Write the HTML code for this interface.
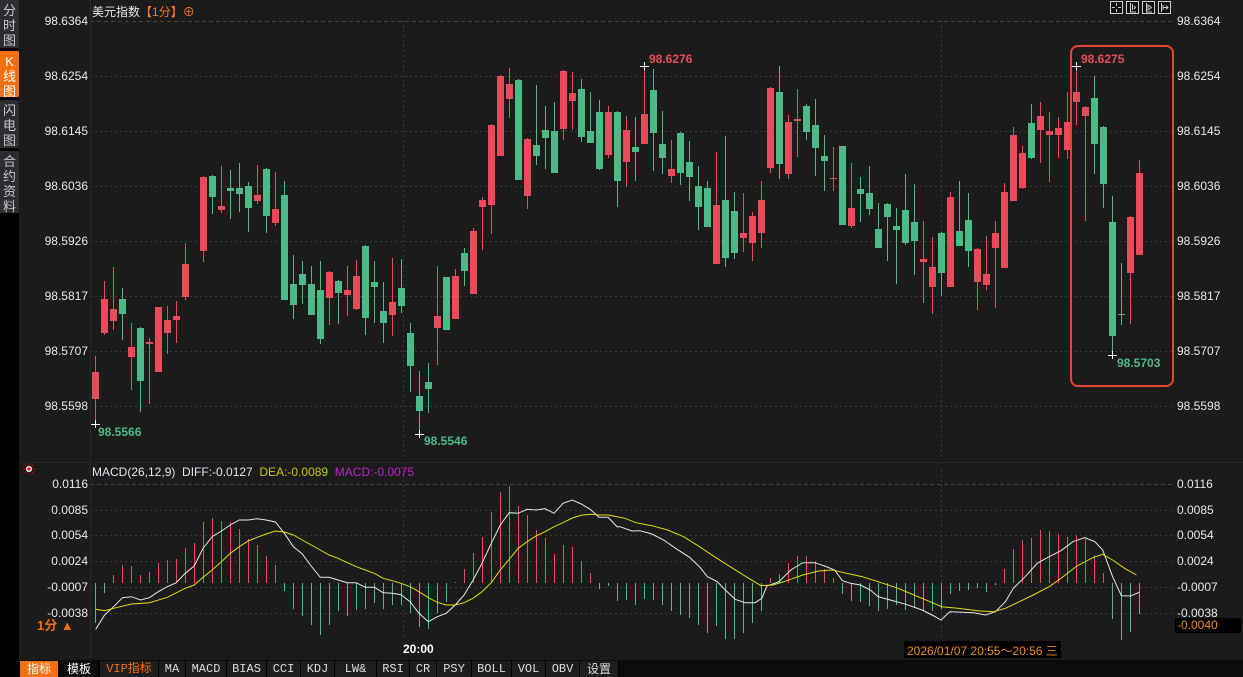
<!DOCTYPE html>
<html><head><meta charset="utf-8"><style>
*{margin:0;padding:0;box-sizing:border-box}
body{width:1243px;height:677px;background:#1b1b1b;overflow:hidden;position:relative;font-family:"Liberation Sans","Noto Sans CJK SC",sans-serif;color:#e6e6e6}
.side{position:absolute;left:0;top:0;width:19px;height:677px;background:#000}
.tab{position:absolute;left:0;width:19px;background:#2b2d31;color:#c8c8c8;font-size:13px;line-height:15px;text-align:center;padding-top:3px}
.tab.on{background:#f57010;color:#fff}
.lab{position:absolute;font-size:12px;color:#e8e8e8}
.l{left:20px;width:68px;text-align:right}
.r{left:1177px}
.bar{position:absolute;left:19px;top:660px;width:1224px;height:17px;background:#0c0c0c}
.bt{position:absolute;top:661px;height:16px;font-size:12px;line-height:16px;text-align:center;color:#ddd;background:#1e1e1e;border-right:1px solid #000;font-family:"Liberation Mono","Noto Sans CJK SC",monospace}
</style></head><body>
<div class="side"></div>
<div class="tab" style="top:0;height:48px">分<br>时<br>图</div>
<div class="tab on" style="top:51px;height:46px">K<br>线<br>图</div>
<div class="tab" style="top:100px;height:48px">闪<br>电<br>图</div>
<div class="tab" style="top:151px;height:62px">合<br>约<br>资<br>料</div>

<svg style="position:absolute;left:0;top:0" width="1243" height="677">
<g stroke="#3a3a3a" stroke-dasharray="2,3" stroke-width="1">
<path d="M90 21.5H1172" stroke="#444" stroke-dasharray="4,3"/>
<path d="M90 76.5H1172M90 131.5H1172M90 186.5H1172M90 241.5H1172M90 296.5H1172M90 351.5H1172M90 406.5H1172"/>
<path d="M90 484.5H1172" stroke="#444" stroke-dasharray="4,3"/>
<path d="M90 510.5H1172M90 535.5H1172M90 561.5H1172M90 587.5H1172M90 613.5H1172"/>
<path d="M403.5 20V460M941.5 20V460M403.5 470V640M941.5 470V640"/>
</g>
<path d="M90.5 0V660" stroke="#262626"/>
<path d="M19 462.5H1243" stroke="#262626"/>
<g id="red" fill="#e94b5b" stroke="#e94b5b">
<path fill="none" d="M95.5 356V424M104.5 281V335M113.5 267V330M131.5 323V390M149.5 338V404M158.5 307V372M167.5 306V354M176.5 301V343M185.5 243V300M203.5 176V262M221.5 166V213M257.5 165V204M275.5 172V226M329.5 271V325M347.5 266V316M356.5 260V310M392.5 258V336M437.5 266V365M455.5 269V319M473.5 228V294M482.5 197V250M491.5 124V234M500.5 75V156M509.5 68V118M527.5 138V209M563.5 70V140M572.5 72V130M608.5 106V158M626.5 116V187M644.5 66V144M671.5 140V183M716.5 152V264M743.5 193V252M752.5 212V261M761.5 181V248M770.5 87V173M788.5 115V179M797.5 89V157M833.5 147V191M851.5 163V228M923.5 221V303M932.5 237V314M950.5 192V287M977.5 248V310M986.5 236V290M995.5 221V308M1004.5 183V268M1013.5 127V201M1022.5 146V189M1040.5 102V163M1049.5 112V182M1058.5 117V158M1067.5 92V159M1076.5 66V125M1085.5 106V221M1130.5 216V324M1139.5 160V255"/>
<g stroke="none">
<rect x="92" y="372" width="7" height="27"/><rect x="101" y="299" width="7" height="34"/><rect x="110" y="309" width="7" height="12"/><rect x="128" y="347" width="7" height="10"/><rect x="146" y="342" width="7" height="2"/><rect x="155" y="307" width="7" height="65"/><rect x="164" y="320" width="7" height="13"/><rect x="173" y="316" width="7" height="4"/><rect x="182" y="264" width="7" height="33"/><rect x="200" y="177" width="7" height="74"/><rect x="218" y="206" width="7" height="4"/><rect x="254" y="195" width="7" height="6"/><rect x="272" y="209" width="7" height="14"/><rect x="326" y="272" width="7" height="26"/><rect x="344" y="290" width="7" height="5"/><rect x="353" y="276" width="7" height="33"/><rect x="389" y="302" width="7" height="13"/><rect x="434" y="316" width="7" height="12"/><rect x="452" y="276" width="7" height="43"/><rect x="470" y="231" width="7" height="63"/><rect x="479" y="200" width="7" height="7"/><rect x="488" y="125" width="7" height="80"/><rect x="497" y="76" width="7" height="80"/><rect x="506" y="84" width="7" height="15"/><rect x="524" y="139" width="7" height="57"/><rect x="560" y="71" width="7" height="58"/><rect x="569" y="93" width="7" height="8"/><rect x="605" y="112" width="7" height="43"/><rect x="623" y="130" width="7" height="32"/><rect x="641" y="114" width="7" height="30"/><rect x="668" y="169" width="7" height="7"/><rect x="713" y="205" width="7" height="59"/><rect x="740" y="233" width="7" height="5"/><rect x="749" y="216" width="7" height="27"/><rect x="758" y="200" width="7" height="33"/><rect x="767" y="88" width="7" height="80"/><rect x="785" y="122" width="7" height="52"/><rect x="794" y="119" width="7" height="2"/><rect x="830" y="178" width="7" height="1"/><rect x="848" y="208" width="7" height="18"/><rect x="920" y="259" width="7" height="3"/><rect x="929" y="267" width="7" height="20"/><rect x="947" y="197" width="7" height="90"/><rect x="974" y="249" width="7" height="33"/><rect x="983" y="274" width="7" height="11"/><rect x="992" y="233" width="7" height="15"/><rect x="1001" y="192" width="7" height="76"/><rect x="1010" y="135" width="7" height="66"/><rect x="1019" y="153" width="7" height="35"/><rect x="1037" y="116" width="7" height="14"/><rect x="1046" y="131" width="7" height="4"/><rect x="1055" y="128" width="7" height="7"/><rect x="1064" y="122" width="7" height="28"/><rect x="1073" y="92" width="7" height="10"/><rect x="1082" y="107" width="7" height="9"/><rect x="1127" y="217" width="7" height="56"/><rect x="1136" y="173" width="7" height="82"/>
</g></g>
<g fill="#4cba87" stroke="#4cba87">
<path fill="none" d="M122.5 288V340M140.5 327V412M212.5 175V214M230.5 170V219M239.5 163V212M248.5 182V232M266.5 168V233M284.5 181V300M293.5 255V319M302.5 261V304M311.5 266V315M320.5 261V344M338.5 280V324M365.5 245V335M374.5 261V323M383.5 282V343M401.5 259V313M410.5 323V392M419.5 371V434M428.5 363V413M446.5 277V330M464.5 248V286M518.5 79V180M536.5 85V165M545.5 106V169M554.5 102V173M581.5 79V142M590.5 92V143M599.5 100V170M617.5 111V207M635.5 117V181M653.5 69V171M662.5 111V174M680.5 132V185M689.5 141V201M698.5 166V230M707.5 181V227M725.5 136V267M734.5 192V259M779.5 66V179M806.5 104V140M815.5 99V176M824.5 135V191M842.5 146V225M860.5 177V222M869.5 166V215M878.5 203V248M887.5 203V261M896.5 208V284M905.5 174V245M914.5 184V275M941.5 232V296M959.5 181V246M968.5 193V267M1031.5 104V159M1094.5 76V174M1103.5 126V208M1112.5 196V355M1121.5 263V325"/>
<g stroke="none">
<rect x="119" y="299" width="7" height="15"/><rect x="137" y="328" width="7" height="53"/><rect x="209" y="176" width="7" height="21"/><rect x="227" y="188" width="7" height="3"/><rect x="236" y="188" width="7" height="6"/><rect x="245" y="186" width="7" height="22"/><rect x="263" y="169" width="7" height="47"/><rect x="281" y="195" width="7" height="105"/><rect x="290" y="284" width="7" height="21"/><rect x="299" y="274" width="7" height="11"/><rect x="308" y="284" width="7" height="31"/><rect x="317" y="290" width="7" height="49"/><rect x="335" y="281" width="7" height="12"/><rect x="362" y="246" width="7" height="72"/><rect x="371" y="282" width="7" height="5"/><rect x="380" y="311" width="7" height="12"/><rect x="398" y="288" width="7" height="18"/><rect x="407" y="333" width="7" height="33"/><rect x="416" y="396" width="7" height="15"/><rect x="425" y="382" width="7" height="7"/><rect x="443" y="277" width="7" height="53"/><rect x="461" y="253" width="7" height="18"/><rect x="515" y="80" width="7" height="100"/><rect x="533" y="145" width="7" height="11"/><rect x="542" y="130" width="7" height="8"/><rect x="551" y="131" width="7" height="42"/><rect x="578" y="89" width="7" height="48"/><rect x="587" y="131" width="7" height="12"/><rect x="596" y="112" width="7" height="57"/><rect x="614" y="112" width="7" height="69"/><rect x="632" y="147" width="7" height="5"/><rect x="650" y="90" width="7" height="43"/><rect x="659" y="144" width="7" height="14"/><rect x="677" y="133" width="7" height="40"/><rect x="686" y="162" width="7" height="15"/><rect x="695" y="186" width="7" height="21"/><rect x="704" y="188" width="7" height="39"/><rect x="722" y="200" width="7" height="58"/><rect x="731" y="211" width="7" height="42"/><rect x="776" y="92" width="7" height="72"/><rect x="803" y="106" width="7" height="26"/><rect x="812" y="125" width="7" height="23"/><rect x="821" y="156" width="7" height="5"/><rect x="839" y="146" width="7" height="79"/><rect x="857" y="189" width="7" height="5"/><rect x="866" y="193" width="7" height="16"/><rect x="875" y="229" width="7" height="19"/><rect x="884" y="204" width="7" height="13"/><rect x="893" y="226" width="7" height="4"/><rect x="902" y="210" width="7" height="33"/><rect x="911" y="222" width="7" height="19"/><rect x="938" y="233" width="7" height="40"/><rect x="956" y="231" width="7" height="15"/><rect x="965" y="220" width="7" height="31"/><rect x="1028" y="123" width="7" height="35"/><rect x="1091" y="98" width="7" height="46"/><rect x="1100" y="127" width="7" height="57"/><rect x="1109" y="222" width="7" height="114"/><rect x="1118" y="314" width="7" height="1"/>
</g></g>
<g stroke="#fff" stroke-width="1"><path d="M91 424.5H100M95.5 420V428M415 434.5H424M419.5 430V438M640 66.5H649M644.5 62V70M1072 66.5H1081M1076.5 62V70M1108 355.5H1117M1112.5 351V359"/></g>
<rect x="1071" y="46" width="102" height="340" rx="7" fill="none" stroke="#e8432e" stroke-width="2"/>
<g font-size="12" font-weight="bold" font-family="Liberation Sans,sans-serif">
<text x="98" y="436" fill="#4cba87">98.5566</text>
<text x="424" y="445" fill="#4cba87">98.5546</text>
<text x="649" y="63" fill="#e94b5b">98.6276</text>
<text x="1081" y="63" fill="#e94b5b">98.6275</text>
<text x="1117" y="367" fill="#4cba87">98.5703</text>
</g>
<!-- MACD histogram -->
<path stroke="#e94b5b" d="M113.5 583V575M122.5 583V565M131.5 583V566M140.5 583V575M149.5 583V572M158.5 583V563M167.5 583V560M176.5 583V559M185.5 583V548M194.5 583V543M203.5 583V522M212.5 583V518M221.5 583V521M230.5 583V522M239.5 583V529M248.5 583V539M257.5 583V545M266.5 583V556M275.5 583V565M455.5 583V582M464.5 583V569M473.5 583V553M482.5 583V537M491.5 583V512M500.5 583V492M509.5 583V486M518.5 583V506M527.5 583V515M536.5 583V530M545.5 583V538M554.5 583V554M563.5 583V545M572.5 583V547M581.5 583V561M590.5 583V573M770.5 583V578M779.5 583V574M788.5 583V563M797.5 583V556M806.5 583V556M815.5 583V561M824.5 583V569M833.5 583V578M1004.5 583V569M1013.5 583V549M1022.5 583V540M1031.5 583V538M1040.5 583V530M1049.5 583V531M1058.5 583V534M1067.5 583V537M1076.5 583V535M1085.5 583V539M1094.5 583V555M1103.5 583V573"/>
<path stroke="#4cba87" d="M95.5 583V623M104.5 583V593M284.5 583V591M293.5 583V609M302.5 583V616M311.5 583V625M320.5 583V635M329.5 583V625M338.5 583V611M347.5 583V616M356.5 583V610M365.5 583V609M374.5 583V603M383.5 583V609M392.5 583V605M401.5 583V605M410.5 583V613M419.5 583V627M428.5 583V629M437.5 583V613M446.5 583V602M599.5 583V589M608.5 583V586M617.5 583V601M626.5 583V600M635.5 583V605M644.5 583V599M653.5 583V600M662.5 583V605M671.5 583V611M680.5 583V615M689.5 583V618M698.5 583V625M707.5 583V633M716.5 583V626M725.5 583V639M734.5 583V639M743.5 583V633M752.5 583V623M761.5 583V611M842.5 583V594M851.5 583V601M860.5 583V602M869.5 583V606M878.5 583V611M887.5 583V609M896.5 583V605M905.5 583V610M914.5 583V607M923.5 583V611M932.5 583V611M941.5 583V609M950.5 583V594M959.5 583V591M968.5 583V590M977.5 583V588M986.5 583V592M995.5 583V585M1112.5 583V619M1121.5 583V640M1130.5 583V632M1139.5 583V614"/>
<polyline fill="none" stroke="#e8e8e8" stroke-width="1" points="95.7,629.3 104.6,615 113.6,606.7 122.5,597.7 131.5,596.7 140.4,600 149.4,597.7 158.3,591.7 167.3,586.7 176.3,582.7 185.2,573.3 194.2,566 203.1,548.3 212.1,536.7 221.4,531 230.3,525 239.3,520 248.2,520 257.2,518.7 266.1,520 275.4,522 284.4,533.3 293.3,546.7 302.3,554 311.2,566 320.2,577.3 329.1,577.3 338.1,580 347.4,582.7 356.3,582.7 365.3,587.3 374.3,587.3 383.2,592.7 392.2,593.3 401.1,594.7 410.1,601.7 419,613.3 428.3,621.7 437.3,616.7 446.2,613.3 455.2,605 464.1,595 473.1,580 482,563.3 491.3,543.3 500.3,525 509.2,512.7 518.2,513.3 527.1,509.3 536.1,510 545,508.7 554,513.3 563,503.3 572.3,500 581.2,504 590.2,509.3 599.1,517.3 608.1,517.3 617,526.7 620,526.7 631.9,531 639.9,530.7 651.8,534 663.7,540 675.6,548.3 689.5,557.3 699.5,566.7 707.4,576.7 717.3,581.7 725.3,590 735.2,599.3 745.1,602.7 755.1,602.7 761.8,598.3 767,586 778.9,581.7 790.8,570 802.8,562.7 814.7,562.7 824.6,566 834.5,570 842.5,580.7 850.4,583.3 860.4,585 870.3,590 878.2,596.7 890.2,600 906,604.3 922,610 933.9,616 941,620 949.8,611.7 961.7,612.3 973.6,612.7 985.5,615 995.4,611.7 1005.4,601.7 1013.3,588.3 1025.2,576.7 1037.2,563.3 1049.1,556.7 1061,550.7 1072.9,541.7 1084.8,537.7 1094.8,541.7 1102.7,550 1112.6,576.7 1121.4,595.7 1130.5,596 1139.3,592.3"/>
<polyline fill="none" stroke="#e6dc00" stroke-width="1" points="95.7,609.3 104.6,610.7 113.6,608.3 131.5,604 149.4,602.7 167.3,597.3 185.2,588.3 194.2,585 203.1,577.3 212.1,570 221.4,561.7 230.3,553.3 239.3,546.7 248.2,541 257.2,537.3 266.1,534 275.4,531 284.4,532 293.3,535 302.3,540 311.2,545 320.2,550 329.1,555 338.1,558.3 347.4,562.7 356.3,566.7 365.3,570 374.3,573.3 383.2,578.3 392.2,580.7 401.1,583.3 410.1,586.7 419,591.7 428.3,597.7 437.3,602.3 446.2,605 455.2,605 464.1,602.7 473.1,598.3 482,591.7 491.3,582.7 500.3,570 509.2,559.3 518.2,548.3 527.1,541.7 536.1,536 545,531.7 554,526.7 563,522.7 572.3,518 581.2,515.3 590.2,514.3 599.1,515 608.1,515 617,516.7 625,518.3 635.9,522.7 651.8,525.7 667.7,530 683.6,536.7 699.5,546.7 715.4,557.3 731.2,567.3 747.1,577.3 761,585.7 773,585 786.9,580.7 802.8,575 818.6,571 832.6,570 846.5,573.3 862.4,576.7 878.2,581.7 898.1,588.3 914,595 929.9,601.7 941.8,606.7 957.7,608.3 977.6,610.7 993.5,611.7 1005.4,608.3 1017.3,602.7 1033.2,595 1049.1,586.7 1061,578.3 1076.9,566 1092.8,557.7 1102.7,554.3 1112.6,560 1124.6,568.3 1136.5,575"/>
<!-- MACD icon -->
<g stroke="#e00" stroke-width="1"><path d="M29 463V465M29 473V475M23 469H25M33 469H35M25 465L26 466M33 465L32 466M25 473L26 472M33 473L32 472"/></g>
<circle cx="29" cy="469" r="3" fill="#fff"/><circle cx="29" cy="469" r="1.6" fill="#e00"/>
<!-- toolbar icons -->
<g fill="none" stroke="#ccc" stroke-width="1">
<rect x="1110.5" y="1.5" width="12" height="12" fill="#111"/><rect x="1126.5" y="1.5" width="12" height="12" fill="#111"/><rect x="1142.5" y="1.5" width="12" height="12" fill="#111"/><rect x="1158.5" y="1.5" width="12" height="12" fill="#111"/>
<path d="M116.5 0" /><path d="M1116.5 3V6M1116.5 9V12M1112 7.5H1115M1118 7.5H1121M1130.5 3V12H1136M1132.5 4V10M1134 6L1135.5 7.5L1134 9M1146.5 3V12H1152M1148 5V10L1151.5 7.5ZM1161.5 3V12M1163 5V10M1163 7.5H1168M1166 5.5L1168 7.5L1166 9.5"/>
</g>
</svg>

<div class="lab" style="left:92px;top:3px;font-size:12px">美元指数<span style="color:#ff7a1a">【1分】⊕</span></div>
<div class="lab l" style="top:14px">98.6364</div><div class="lab l" style="top:69px">98.6254</div><div class="lab l" style="top:124px">98.6145</div><div class="lab l" style="top:179px">98.6036</div><div class="lab l" style="top:234px">98.5926</div><div class="lab l" style="top:289px">98.5817</div><div class="lab l" style="top:344px">98.5707</div><div class="lab l" style="top:399px">98.5598</div>
<div class="lab r" style="top:14px">98.6364</div><div class="lab r" style="top:69px">98.6254</div><div class="lab r" style="top:124px">98.6145</div><div class="lab r" style="top:179px">98.6036</div><div class="lab r" style="top:234px">98.5926</div><div class="lab r" style="top:289px">98.5817</div><div class="lab r" style="top:344px">98.5707</div><div class="lab r" style="top:399px">98.5598</div>
<div class="lab l" style="top:477px">0.0116</div><div class="lab l" style="top:503px">0.0085</div><div class="lab l" style="top:528px">0.0054</div><div class="lab l" style="top:554px">0.0024</div><div class="lab l" style="top:580px">-0.0007</div><div class="lab l" style="top:606px">-0.0038</div>
<div class="lab r" style="top:477px">0.0116</div><div class="lab r" style="top:503px">0.0085</div><div class="lab r" style="top:528px">0.0054</div><div class="lab r" style="top:554px">0.0024</div><div class="lab r" style="top:580px">-0.0007</div><div class="lab r" style="top:606px">-0.0038</div>
<div class="lab" style="left:1175px;top:618px;width:66px;height:15px;background:#000;color:#f08a20;padding-left:2px">-0.0040</div>
<div class="lab" style="left:92px;top:465px;font-size:12px;color:#dfe6f0">MACD(26,12,9)&nbsp; DIFF:-0.0127&nbsp; <span style="color:#c8c800">DEA:-0.0089</span>&nbsp; <span style="color:#c020d0">MACD:-0.0075</span></div>
<div class="lab" style="left:37px;top:615px;font-size:13px;font-weight:bold;color:#f07010">1分 ▲</div>
<div class="lab" style="left:403px;top:642px;font-size:12px;font-weight:bold;color:#fff">20:00</div>
<div class="lab" style="left:904px;top:641px;height:17px;background:#000;color:#f08a20;padding:1px 3px">2026/01/07 20:55～20:56 三</div>
<div class="bar"></div>
<div class="bt" style="left:20px;width:39px;background:#f57010;color:#fff;font-family:'Liberation Sans','Noto Sans CJK SC',sans-serif">指标</div>
<div class="bt" style="left:59px;width:41px;color:#fff;background:#0c0c0c;font-family:'Liberation Sans','Noto Sans CJK SC',sans-serif">模板</div>
<div class="bt" style="left:100px;width:59px;color:#f07010">VIP指标</div>
<div class="bt" style="left:159px;width:27px">MA</div>
<div class="bt" style="left:186px;width:41px">MACD</div>
<div class="bt" style="left:227px;width:40px">BIAS</div>
<div class="bt" style="left:267px;width:34px">CCI</div>
<div class="bt" style="left:301px;width:34px">KDJ</div>
<div class="bt" style="left:335px;width:42px">LW&amp;</div>
<div class="bt" style="left:377px;width:33px">RSI</div>
<div class="bt" style="left:410px;width:27px">CR</div>
<div class="bt" style="left:437px;width:35px">PSY</div>
<div class="bt" style="left:472px;width:40px">BOLL</div>
<div class="bt" style="left:512px;width:34px">VOL</div>
<div class="bt" style="left:546px;width:34px">OBV</div>
<div class="bt" style="left:580px;width:39px;font-family:'Liberation Sans','Noto Sans CJK SC',sans-serif">设置</div>
</body></html>
